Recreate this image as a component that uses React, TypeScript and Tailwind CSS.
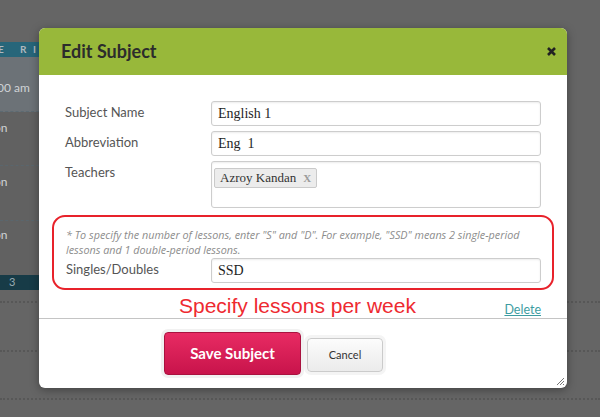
import React from "react";

function Field({ label, children }: { label: string; children: React.ReactNode }) {
  return (
    <>
      <div className="pt-[3px] text-[13px] leading-[17px] text-[#555]">{label}</div>
      {children}
    </>
  );
}

function TextBox({ value }: { value: string }) {
  return (
    <input
      readOnly
      defaultValue={value}
      className="h-[25px] w-[330px] rounded-[3px] border border-[#cdcdcd] bg-white px-[6px] font-['Liberation_Serif',serif] text-[14px] text-[#1e1e1e] shadow-[inset_0_1px_2px_rgba(0,0,0,0.08)] outline-none"
    />
  );
}

function BackgroundTable() {
  return (
    <div className="w-[60px] pt-[42px] text-[12px] text-[#cfd3d6]">
      <div className="flex h-[15px] items-center bg-[#27667a] text-[10px] font-bold text-[#aeb9be]">
        <span className="-ml-[2px] w-[22px]">E</span>
        <span className="w-[13px]">R</span>
        <span>I</span>
      </div>
      <div className="h-[55px] border-b border-dashed border-[#5c6a72] bg-[#6c7277] pt-[22px]">
        <span className="-ml-[3px]">00 am</span>
      </div>
      <div className="h-[54px] border-b border-dashed border-[#5a666d] bg-[#616161] pt-[7px]">
        <span className="-ml-[6px]">on</span>
      </div>
      <div className="h-[55px] border-b border-dashed border-[#5a666d] bg-[#616161] pt-[7px]">
        <span className="-ml-[6px]">on</span>
      </div>
      <div className="h-[54px] bg-[#616161] pt-[5px]">
        <span className="-ml-[6px]">on</span>
      </div>
      <div className="flex h-[15px] items-center bg-[#173b47] pl-[9px] text-[11px] text-[#98aab2]">3</div>
    </div>
  );
}

export default function App() {
  return (
    <div className="relative h-[417px] w-[600px] overflow-hidden bg-[#656565] font-['Lato',sans-serif]">
      <BackgroundTable />
      <div className="mt-[11px] border-t-2 border-dotted border-[#575757]" />
      <div className="mt-[47px] border-t-2 border-dotted border-[#575757]" />
      <div className="mt-[46px] border-t-2 border-dotted border-[#575757]" />

      {/* modal */}
      <div className="absolute left-[39px] top-[28px] flex h-[360px] w-[528px] flex-col overflow-hidden rounded-[6px] bg-white shadow-[0_2px_10px_rgba(0,0,0,0.35)]">
        <div className="flex h-[47px] items-center justify-between bg-[#98b83a] pl-[22px] pr-[11px]">
          <h2 className="text-[18px] font-bold text-[#2c2c2c]">Edit Subject</h2>
          <svg width="9" height="9" viewBox="0 0 9 9">
            <path d="M1 1L8 8M8 1L1 8" stroke="#222" strokeWidth="2.6" />
          </svg>
        </div>

        <div className="h-[243px] px-[26px] pt-[26px]">
          <div className="grid grid-cols-[146px_330px] gap-y-[5px]">
            <Field label="Subject Name">
              <TextBox value="English 1" />
            </Field>
            <Field label="Abbreviation">
              <TextBox value="Eng  1" />
            </Field>
            <Field label="Teachers">
              <div className="h-[47px] w-[330px] rounded-[3px] border border-[#cdcdcd] p-[2px] shadow-[inset_0_1px_2px_rgba(0,0,0,0.08)]">
                <span className="inline-flex h-[20px] items-center rounded-[2px] border border-[#cacaca] bg-[#ececec] px-[5px] font-['Liberation_Serif',serif] text-[13px] text-[#333]">
                  Azroy Kandan
                  <span className="ml-[7px] text-[11px] font-bold text-[#9a9a9a]">X</span>
                </span>
              </div>
            </Field>
          </div>

          <div className="-mx-[13px] mt-[7px] rounded-[13px] border-2 border-[#e8222b] px-[12px] pb-[5px] pt-[10px]">
            <p className="font-['Open_Sans',sans-serif] text-[10.8px] italic leading-[15px] text-[#8c8c8c]">
              * To specify the number of lessons, enter "S" and "D". For example, "SSD" means 2 single-period
              <br />
              lessons and 1 double-period lessons.
            </p>
            <div className="mt-[1px] grid grid-cols-[145px_330px]">
              <Field label="Singles/Doubles">
                <TextBox value="SSD" />
              </Field>
            </div>
          </div>

          <div className="flex h-[28px] items-center">
            <p className="ml-[114px] mt-[2px] font-['Liberation_Sans',sans-serif] text-[21px] leading-none text-[#ee2a30]">
              Specify lessons per week
            </p>
            <a className="ml-auto mt-[12px] text-[12.5px] text-[#3d9ca1] underline">Delete</a>
          </div>
        </div>

        <div className="relative flex flex-1 items-start gap-[6px] border-t border-[#c4c4c4] pl-[125px] pt-[13px]">
          <button className="h-[43px] w-[137px] rounded-[4px] border border-[#a9123f] bg-gradient-to-b from-[#e82a63] to-[#c8134b] text-[15px] font-bold text-white ring-[3px] ring-[#f1f1f1]">
            Save Subject
          </button>
          <button className="mt-[6px] h-[34px] w-[76px] rounded-[4px] border border-[#cbcbcb] bg-gradient-to-b from-[#fcfcfc] to-[#ebebeb] text-[11px] text-[#333] ring-[3px] ring-[#f4f4f4]">
            Cancel
          </button>
          <svg className="absolute bottom-[2px] right-[2px]" width="10" height="10" viewBox="0 0 10 10">
            <path d="M9 2L2 9M9 5L5 9M9 8L8 9" stroke="#777" strokeWidth="1" />
          </svg>
        </div>
      </div>
    </div>
  );
}
